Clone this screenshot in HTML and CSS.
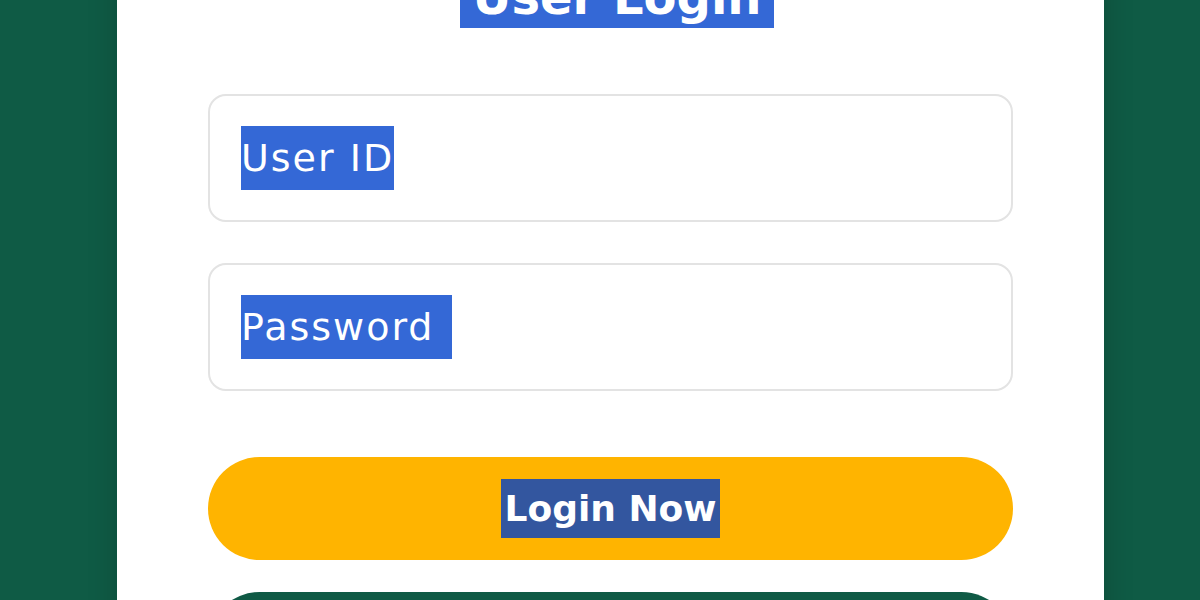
FILE: index.html
```html
<!DOCTYPE html>
<html lang="en">

<head>
    <meta charset="UTF-8">
    <meta name="viewport" content="width=device-width, initial-scale=1.0">
    <title>User Login</title>

    <link rel="stylesheet" href="styles.css">
</head>

<body>

    <div class="login">

        <h1 class="title"><span class="sel">User Login</span></h1>

        <div class="form">
            <div class="field">
                <span class="sel">User ID</span>
            </div>

            <div class="field">
                <span class="sel sel-wide">Password</span>
            </div>

            <button class="btn btn-login"><span class="sel sel-dark">Login Now</span></button>

            <button class="btn btn-register"></button>
        </div>

    </div>

</body>

</html>
```

FILE: styles.css
```css
* {
    margin: 0;
    padding: 0;
    box-sizing: border-box;
}

body {
    height: 600px;
    overflow: hidden;
    background-color: #0f5b45;
    font-family: "DejaVu Sans", "Open Sans", sans-serif;
}

.login {
    width: 987px;
    height: 700px;
    margin: -34px 0 0 117px;
    padding: 0 91px;
    background-color: white;
    box-shadow: 0 0 28px rgba(0, 0, 0, .18);
}

.sel {
    display: inline-block;
    color: white;
    background-color: #3468d6;
}

.sel-dark {
    background-color: #33569f;
}

.title {
    padding-left: 13px;
    text-align: center;
    font-size: 48px;
    font-weight: bold;
}

.title .sel {
    line-height: 62px;
    padding: 0 12px;
}

.form {
    display: flex;
    flex-direction: column;
    margin-top: 66px;
}

.field {
    display: flex;
    align-items: center;
    height: 128px;
    padding-left: 31px;
    border: 2px solid #e3e3e3;
    border-radius: 18px;
    font-size: 38px;
    letter-spacing: 2px;
}

.field + .field {
    margin-top: 41px;
}

.field .sel {
    line-height: 64px;
}

.field .sel-wide {
    padding-right: 17px;
}

.btn {
    display: flex;
    align-items: center;
    justify-content: center;
    height: 103px;
    border: 0;
    border-radius: 52px;
    font-family: inherit;
    font-size: 36px;
    font-weight: bold;
}

.btn-login {
    margin-top: 66px;
    background-color: #ffb400;
}

.btn-login .sel {
    line-height: 59px;
    padding: 0 3px;
}

.btn-register {
    margin-top: 32px;
    background-color: #0f5a45;
}
```
